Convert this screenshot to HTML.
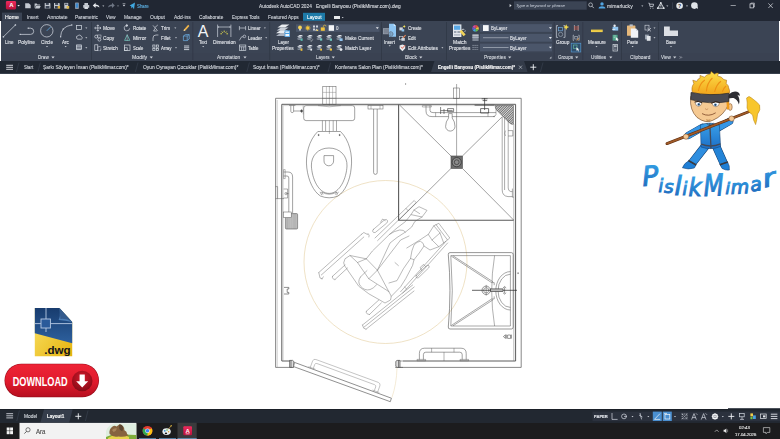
<!DOCTYPE html>
<html><head><meta charset="utf-8"><title>AutoCAD</title>
<style>
html,body{margin:0;padding:0;}
body{width:780px;height:439px;overflow:hidden;background:#fff;position:relative;font-family:"Liberation Sans",sans-serif;}
.abs{position:absolute;}
.t{position:absolute;white-space:nowrap;transform-origin:0 50%;-webkit-text-stroke:.12px currentColor;}
#title{left:0;top:0;width:780px;height:21px;background:#212733;}
#ribbon{left:1px;top:20.6px;width:777.6px;height:40px;background:#3b4454;}
#ribbonlab{left:1px;top:53.2px;width:777.6px;height:7.4px;background:#3a4252;}
#filetabs{left:0;top:60.6px;width:780px;height:13.1px;background:#212833;border-bottom:1.7px solid #38404d;box-sizing:border-box;}
#layoutbar{left:0;top:408.9px;width:780px;height:13.8px;background:#222831;border-top:1px solid #1b2028;box-sizing:border-box;}
#taskbar{left:0;top:422.6px;width:780px;height:16.4px;background:#1c1c1e;}
.sep{position:absolute;top:22px;width:0.6px;height:38px;background:#2c3340;}
.dd{position:absolute;background:#4b566a;height:7.6px;}
svg{position:absolute;left:0;top:0;overflow:visible;}
#txt{position:absolute;left:0;top:0;width:780px;height:439px;will-change:transform;}

</style></head>
<body>
<div id="title" class="abs"></div>
<div id="ribbon" class="abs"></div>
<div id="ribbonlab" class="abs"></div>
<div id="filetabs" class="abs"></div>
<div id="layoutbar" class="abs"></div>
<div id="taskbar" class="abs"></div>

<svg width="780" height="74" viewBox="0 0 780 74" font-family="Liberation Sans, sans-serif">
<defs>
<linearGradient id="gA" x1="0" y1="0" x2="0" y2="1"><stop offset="0" stop-color="#ee2a5c"/><stop offset="1" stop-color="#b9123c"/></linearGradient>
<path id="dn" d="M-1 -0.5 L1 -0.5 L0 0.7 Z"/>
</defs>
<!-- tab backgrounds -->
<rect x="2" y="12.6" width="20" height="8.2" fill="#3b4454"/>
<rect x="303" y="12.8" width="22" height="8" fill="#1d7aa8"/>
<rect x="334" y="16" width="6" height="3" fill="#e6e8ea"/>
<use href="#dn" x="342.7" y="17.5" fill="#cfd3da"/>
<!-- app logo -->
<rect x="5.900" y="1.100" width="10.200" height="8.300" rx="1.300" fill="url(#gA)"/>
<text x="11.400" y="7.300" font-size="6" font-weight="bold" fill="#fff" text-anchor="middle">A</text>
<path d="M17.300 4.900 h2.600 l-1.300 1.500z" fill="#eef0f3"/>
<!-- quick access -->
<g fill="#c3c8d0" stroke="none">
 <path d="M25.200 3.200 h3.600 l1.900 1.700 v3.300 h-5.500z"/>
 <path d="M34.600 3.600 h2.100 l.7 .8 h2.700 v1 h-4.300 l-1.200 2.800z M36.100 5.900 h4.700 l-1.300 2.700 h-4.700z"/>
 <path d="M44.700 3 h5.100 l.6 .6 v4.900 h-5.700z" />
 <path d="M54 3 h5.100 l.6 .6 v4.900 h-5.700z" />
 <path d="M64.300 2.900 h3.900 v5.700 h-3.900z" />
 <rect x="75" y="2.500" width="3.900" height="6.400" rx=".7" fill="#8d96a4"/>
 <path d="M83.200 4.900 h6 v2.900 h-6z M84.400 3 h3.600 v1.900 h-3.600z M84.400 6.900 h3.600 v2 h-3.600z"/>
</g>
<g fill="#3b4454">
 <rect x="45.800" y="3" width="3" height="1.900"/><rect x="45.600" y="6" width="3.900" height="2.500"/>
 <rect x="55.100" y="3" width="3" height="1.900"/><rect x="54.900" y="6" width="3.900" height="2.500"/>
 <rect x="65" y="3.600" width="2.500" height="1.200"/>
 <rect x="75.700" y="3.400" width="2.500" height="4.300" fill="#3b8ad0"/>
 <rect x="84.900" y="7.400" width="2.600" height="1" fill="#f1f3f5"/>
</g>
<rect x="57.700" y="6" width="2.400" height="2.500" fill="#d9aa3a"/>
<rect x="66.600" y="6" width="2.600" height="2.700" fill="#dcb84e"/>
<!-- undo/redo -->
<path d="M99.4 7.6 c0-2.6-2-3.2-3.8-3.2 v-1.6 l-2.8 2.6 2.8 2.6 v-1.7 c1.6 0 2.8.2 3.8 1.3z" fill="#e8ebef"/>
<use href="#dn" x="103.3" y="6" fill="#cfd3da"/>
<path d="M108.2 7.6 c0-2.6 2-3.2 3.8-3.2 v-1.6 l2.8 2.6 -2.8 2.6 v-1.7 c-1.6 0-2.8.2-3.8 1.3z" fill="#6e7684"/>
<use href="#dn" x="118" y="6" fill="#8a909c"/>
<path d="M122.6 4.8 h2.8 l-1.4 1.8z M122.6 3.6 h2.8 v.5 h-2.8z" fill="#cfd3da"/>
<path d="M129.6 5.4 l5.4-2.8 -1 6.6 -1.6-2.2 -1 1.4 -.2-2.2z" fill="#3fa7e0"/>
<!-- search box -->
<path d="M509.600 4 l2 1.600 -2 1.600z" fill="#dfe3e8"/>
<rect x="514" y="1.3" width="72.7" height="8.4" fill="#3b4454"/>
<circle cx="590.6" cy="4.8" r="1.9" fill="none" stroke="#cfd3da" stroke-width=".7"/>
<path d="M592 6.2 l1.8 1.9" stroke="#cfd3da" stroke-width=".8"/>
<circle cx="602" cy="3.9" r="1.7" fill="#52a6e4"/>
<path d="M598.6 8.6 c0-3 6.8-3 6.8 0z" fill="#52a6e4"/>
<use href="#dn" x="642.3" y="6" fill="#cfd3da"/>
<path d="M648.4 3.2 h1 l.6 3.4 h3 l.6-2.4 h-3.8 M650.4 7.8 v.9 M653 7.8 v.9" stroke="#cfd3da" stroke-width=".8" fill="none"/>
<path d="M660.8 2.8 l-3 5.4 h6z M660.8 4.6 v2" stroke="#dfe3e8" stroke-width=".9" fill="none"/>
<circle cx="660.8" cy="2.9" r=".9" fill="#dfe3e8"/><circle cx="657.8" cy="8.2" r=".9" fill="#dfe3e8"/><circle cx="663.8" cy="8.2" r=".9" fill="#dfe3e8"/>
<use href="#dn" x="667.3" y="6" fill="#cfd3da"/>
<rect x="672.2" y="2.4" width=".5" height="6.6" fill="#4a5262"/>
<circle cx="679.6" cy="5.7" r="3.3" fill="#e6e9ed"/>
<text x="679.6" y="7.5" font-size="5" font-weight="bold" fill="#212733" text-anchor="middle">?</text>
<use href="#dn" x="687" y="6" fill="#cfd3da"/>
<circle cx="694.4" cy="5.6" r="3.3" fill="#dfe3e8"/>
<path d="M696 7.4 l2 1.6 -.4-2.4z" fill="#dfe3e8"/>
<!-- window controls -->
<rect x="730.6" y="5.3" width="5.2" height=".6" fill="#e0e3e8"/>
<rect x="750" y="3.9" width="3.6" height="4" fill="none" stroke="#e0e3e8" stroke-width=".7"/>
<path d="M750.9 3.9 v-.8 h3.5 v3.9 h-.8" fill="none" stroke="#e0e3e8" stroke-width=".6"/>
<path d="M768.4 3.4 l4.4 4.6 M772.8 3.4 l-4.4 4.6" stroke="#e0e3e8" stroke-width=".7"/>
</svg>

<svg width="780" height="74" viewBox="0 0 780 74" font-family="Liberation Sans, sans-serif">
<!-- separators -->
<g fill="#2d3441">
<rect x="91.1" y="22" width=".6" height="38"/><rect x="192.6" y="22" width=".6" height="38"/><rect x="269.5" y="22" width=".6" height="38"/>
<rect x="381" y="22" width=".6" height="38"/><rect x="446.3" y="22" width=".6" height="38"/><rect x="553.8" y="22" width=".6" height="38"/>
<rect x="582.6" y="22" width=".6" height="38"/><rect x="621" y="22" width=".6" height="38"/><rect x="658.1" y="22" width=".6" height="38"/>
</g>
<!-- Draw panel -->
<g fill="none" stroke="#cdd3dc" stroke-width=".75">
<path d="M3.4 36.8 L15.4 25"/>
<path d="M20.2 34.4 H30.6 A3 3 0 0 0 30.6 28.2 H28.2"/>
<circle cx="46.8" cy="30.8" r="6.2"/>
<path d="M60.6 36.8 Q61 26.4 71.8 25"/>
<rect x="76.4" y="25.6" width="5.2" height="3.8"/>
<path d="M76.6 38 a1.6 1.6 0 0 1 1.4-2.2 a1.8 1.8 0 0 1 3.2.6 a1.5 1.5 0 0 1 .2 2.8 h-3.6 a1.3 1.3 0 0 1-1.2-1.2z"/>
<rect x="76.6" y="45" width="4.8" height="4.6"/>
<path d="M76 46.4 h6 M76 48.2 h6 M78 44.4 v5.8 M80 44.4 v5.8" stroke-width=".5"/>
</g>
<path d="M46.8 30.8 L50.6 27" stroke="#5aa9e6" stroke-width=".8"/>
<g fill="#cdd3dc"><rect x="2.7" y="36.1" width="1.4" height="1.4"/><rect x="14.7" y="24.3" width="1.4" height="1.4"/>
<rect x="19.6" y="33.8" width="1.2" height="1.2"/><rect x="27.6" y="27.6" width="1.2" height="1.2"/>
<rect x="60" y="36.2" width="1.2" height="1.2"/><rect x="71.2" y="24.4" width="1.2" height="1.2"/><rect x="62.6" y="28.4" width="1.2" height="1.2"/></g>
<g fill="#cfd3da">
<use href="#dn" x="86.3" y="28"/><use href="#dn" x="86.3" y="37.8"/><use href="#dn" x="86.3" y="47.7"/>
<use href="#dn" x="47" y="46.6"/><use href="#dn" x="65.7" y="46.6"/>
<use href="#dn" x="175.3" y="28"/><use href="#dn" x="176" y="37.8"/><use href="#dn" x="176" y="47.7"/>
<use href="#dn" x="203.2" y="46.6"/><use href="#dn" x="264.9" y="28"/><use href="#dn" x="266.2" y="37.8"/>
<use href="#dn" x="389.7" y="45.8"/><use href="#dn" x="442.4" y="47.7"/>
<use href="#dn" x="596.5" y="46.6"/><use href="#dn" x="632.6" y="46.6"/><use href="#dn" x="654.5" y="28"/><use href="#dn" x="654.5" y="37.8"/><use href="#dn" x="671" y="46.6"/>
<!-- panel label arrows -->
<g transform="translate(0,57.4) scale(1.6)">
<use href="#dn" x="33.12" y="0"/><use href="#dn" x="94.56" y="0"/><use href="#dn" x="153.12" y="0"/><use href="#dn" x="208.31" y="0"/><use href="#dn" x="263.00" y="0"/><use href="#dn" x="318.56" y="0"/><use href="#dn" x="360.44" y="0"/><use href="#dn" x="381.75" y="0"/><use href="#dn" x="421.69" y="0"/>
</g>
<path d="M551.4 56.6 v1.8 h-1.8z"/>
<path d="M679.6 56.4 l.9 1 -.9 1 M680.9 56.4 l.9 1 -.9 1" fill="none" stroke="#cfd3da" stroke-width=".5"/>
</g>
<!-- Modify panel -->
<g fill="none" stroke="#d5dae2" stroke-width=".7">
<path d="M97.8 25 v6 M94.8 28 h6 M96.8 26 l1-1.2 1 1.2 M96.8 30 l1 1.2 1-1.2 M95.8 27 l-1.2 1 1.2 1 M99.8 27 l1.2 1 -1.2 1"/>
<circle cx="96.2" cy="36.6" r="1.5"/><circle cx="99.4" cy="39.6" r="1.5"/><rect x="97.6" y="35" width="3.4" height="2.2" stroke-width=".5"/>
<rect x="94.8" y="44.8" width="3" height="5.8"/><rect x="97.8" y="46.6" width="3" height="4" stroke-dasharray=".8 .6"/>
<path d="M129.6 28.4 a2.7 2.7 0 1 1 -2-2.9" /><path d="M126.6 24.4 l1.4 1.2 -1.6 .9z" fill="#d5dae2"/>
<rect x="124.4" y="45" width="5.6" height="5.6"/><rect x="124.4" y="47.8" width="2.8" height="2.8"/>
<path d="M153 25.4 l4.6 5.4 M157.8 25 l-3 2.6 M155 28.4 l-1.4 2.6 h3.2"/>
<path d="M153 41 v-3 a3 3 0 0 1 3-3 h2.4"/>
<rect x="152.8" y="45" width="2.2" height="2.2"/><rect x="156.4" y="45" width="2.2" height="2.2"/><rect x="152.8" y="48.4" width="2.2" height="2.2"/><rect x="156.4" y="48.4" width="2.2" height="2.2"/>
<path d="M184 46 h5.2 M184 47.8 h5.2 M184 49.6 h5.2" stroke-width=".9"/>
</g>
<path d="M127.2 34.8 l2.6 5.6 h-5.2z" fill="none" stroke="#6fc0b8" stroke-width=".8"/>
<path d="M127.2 34.4 v6.4" stroke="#d5dae2" stroke-width=".4"/>
<path d="M183.6 31 l.6-1.8 4-4.4 1.2 1.2 -4 4.4z" fill="#f0b54a"/><path d="M183.6 31 l.6-1.8 1.2 1.2z" fill="#f6e0b0"/>
<path d="M183.4 36 l2-1.4 h3.8 v4.4 l-2 1.6 h-3.8z M183.4 36 h3.8 l2-1.4 M187.2 36 v4.6" fill="none" stroke="#6fb1e8" stroke-width=".7"/>
<!-- Annotation -->
<text x="203.1" y="36.5" font-size="16" fill="#f2f4f7" text-anchor="middle">A</text>
<g fill="none" stroke="#cdd3dc" stroke-width=".7">
<path d="M217.6 24.6 v12.4 M230.9 24.6 v12.4 M217.6 27 h13.3"/>
<path d="M239.4 26 v4.2 M245.6 26 v4.2 M239.4 28 h6.2"/>
<path d="M239.4 40.4 l2.2-3.6 h1.6"/><circle cx="244.4" cy="36.4" r="1.3"/>
<rect x="239.4" y="45" width="6.4" height="5.4"/><path d="M239.4 46.8 h6.4 M241.6 46.8 v3.6 M243.7 46.8 v3.6"/>
</g>
<path d="M219 26.2 l-1.2 .8 1.2 .8z M229.5 26.2 l1.2 .8 -1.2 .8z" fill="#cdd3dc"/>
<path d="M224.2 30.6 v1.6 M221.8 31.6 l1 1.2 M226.6 31.6 l-1 1.2 M220.4 33.8 h1.6 M226.4 33.8 h1.6" stroke="#e8e04a" stroke-width=".9"/>
<!-- Layers -->
<path d="M277.4 27.6 l4.4-3 h7.6 l-4.4 3z" fill="#e9ecf0"/><path d="M276.6 30.4 l4.4-3 h7.6 l-4.4 3z" fill="#c9cfd8"/><path d="M276 33.2 l4.400-3 h7.600 l-4.400 3z" fill="#e9ecf0"/><path d="M276 36 l4.400-3 h5 v3z" fill="#aab2bf"/>
<rect x="284.600" y="30.400" width="5.400" height="6.600" fill="#4d9fe0"/><rect x="285.400" y="31.400" width="3.800" height="1.600" fill="#d7ecfb"/><rect x="285.400" y="34" width="3.800" height="2.200" fill="#f4f6f8"/>
<rect x="296" y="24.300" width="83.500" height="7.600" fill="#4b566a"/>
<circle cx="300" cy="27.400" r="1.900" fill="#f3d25a"/><rect x="299.200" y="29" width="1.600" height="1.600" fill="#d9dde3"/>
<circle cx="307.800" cy="28" r="1.700" fill="#f3c43a"/><path d="M307.800 25 v6 M304.800 28 h6 M305.700 25.900 l4.200 4.200 M309.900 25.900 l-4.200 4.200" stroke="#f3c43a" stroke-width=".5"/>
<path d="M313 25.400 h2 v2 h-2z M316 25.400 h2 v2 h-2z M313 28.600 h2 v2 h-2z M316.400 28.400 l1.400 2.400 h-2.800z" fill="#cfd4dc"/><rect x="316.600" y="29.600" width="1.600" height="1.400" fill="#f3d25a"/>
<rect x="320.800" y="27.400" width="4" height="3.400" fill="#f0c33c"/><path d="M323.400 27.400 v-1 a1.300 1.300 0 0 1 2.600 0" fill="none" stroke="#f0c33c" stroke-width=".7"/>
<rect x="328.700" y="25.200" width="5.300" height="5.600" fill="#f4f5f7"/>
<path d="M375.80 27.30 h3 l-1.5 1.8z" fill="#e6e9ee"/>
<defs><g id="lyr"><path d="M0 -1 l2.600-1.800 h3.400 l-2.600 1.800z" fill="#dfe3e8"/><path d="M0 .6 l2.600-1.800 h3.400 l-2.600 1.800z" fill="#aab2bf"/><path d="M0 2.200 l2.600-1.800 h3.400 l-2.600 1.800z" fill="#7f8896"/></g></defs>
<use href="#lyr" x="306.700" y="37.800"/><use href="#lyr" x="316.400" y="37.800"/><use href="#lyr" x="326" y="37.800"/><use href="#lyr" x="336.200" y="37.800"/>
<use href="#lyr" x="297" y="47.700"/><use href="#lyr" x="306.700" y="47.700"/><use href="#lyr" x="316.400" y="47.700"/><use href="#lyr" x="326" y="47.700"/><use href="#lyr" x="336.200" y="47.700"/>
<use href="#lyr" x="297" y="37.800"/>
<g>
<rect x="300.600" y="38.600" width="2" height="2.200" fill="#59c3b5"/><path d="M310.400 40.600 l.8 .8 1.600-2" stroke="#e8ebef" stroke-width=".6" fill="none"/><rect x="320" y="38.400" width="2.200" height="2.200" fill="#6ec7c0"/><rect x="329.800" y="38.600" width="2.200" height="2.200" fill="#6ec7c0"/>
<rect x="339.600" y="38.400" width="3" height="2.600" fill="#8fc3ee"/>
<rect x="300.600" y="48.600" width="1.800" height="2.200" fill="#f0c33c"/><circle cx="311.200" cy="49.800" r="1" fill="#e8ebef"/><rect x="320.200" y="48.800" width="1.800" height="1.800" fill="#f0c33c"/><rect x="329.800" y="48.600" width="2.200" height="2" fill="#f0c33c"/>
<circle cx="341" cy="49.600" r="1.400" fill="#e8ebef"/>
</g>
<!-- Block -->
<rect x="383" y="28.200" width="8.600" height="6" fill="#9aa3b0"/><rect x="383.600" y="28.800" width="7.400" height="4.800" fill="#7c8594"/>
<path d="M389 23.800 h4.800 l2.200 2.200 v10.800 h-7z" fill="#8ec5f2"/><path d="M393.800 23.800 v2.200 h2.200z" fill="#d8ecfb"/>
<circle cx="390.800" cy="34" r="2.200" fill="none" stroke="#555e6c" stroke-width=".6"/><path d="M388.200 34 h5.200 M390.800 31.400 v5.200" stroke="#555e6c" stroke-width=".4"/>
<g>
<rect x="399.400" y="27.400" width="3.400" height="3" fill="#cfd4dc"/><path d="M401.600 29.600 l2.600-.6 v2.600 h-2.600z" fill="#8fc3ee"/><path d="M404.200 24.800 l.5 1.100 1.100 .500 -1.100 .500 -.5 1.100 -.5-1.100 -1.100-.500 1.100-.500z" fill="#f3e25a"/>
<rect x="399.400" y="36.400" width="3.400" height="3.400" fill="none" stroke="#cfd4dc" stroke-width=".6"/><rect x="401.400" y="38" width="3.400" height="2.800" fill="#cfd4dc"/><path d="M402.600 37.400 l2.600-2.600 .8 .8 -2.600 2.600z" fill="#f08a5a"/>
<path d="M399.600 45.400 l2.800-1 2.800 1 v3 l-2.800 2.800 -2.800-2.800z" fill="#e8ebef"/><path d="M401.200 46.800 l1.200 1.600 2.800-3.400" stroke="#e0503a" stroke-width=".8" fill="none"/>
</g>
<!-- Properties -->
<path d="M453 24.400 h8.400 v12.600 h-8.400z" fill="#e4e7ec"/><rect x="454" y="25.600" width="6.200" height="4.200" fill="#5aa9e6"/><rect x="454" y="31" width="2.400" height="2" fill="#9aa3b0"/><rect x="457.400" y="31" width="2.800" height="2" fill="#9aa3b0"/><rect x="454" y="34" width="6.200" height="1.800" fill="#b8bfc9"/>
<path d="M459.600 31.400 l2-1.600 4 4.600 -2 1.800z" fill="#f0d35a"/><path d="M461.600 29.800 l1.800-.8 .8 1 M464.400 31.400 l1.400-.6" stroke="#f4f6f8" stroke-width=".7" fill="none"/>
<g transform="translate(475.500,28.400)">
<path d="M0 0 L0 -3.300 A3.300 3.300 0 0 1 2.860 -1.650z" fill="#e8533a"/><path d="M0 0 L2.860 -1.650 A3.300 3.300 0 0 1 2.860 1.650z" fill="#f0c33c"/><path d="M0 0 L2.860 1.650 A3.300 3.300 0 0 1 0 3.300z" fill="#6cc04a"/>
<path d="M0 0 L0 3.300 A3.300 3.300 0 0 1 -2.860 1.650z" fill="#3fa7e0"/><path d="M0 0 L-2.860 1.650 A3.300 3.300 0 0 1 -2.860 -1.650z" fill="#6a5acd"/><path d="M0 0 L-2.860 -1.650 A3.300 3.300 0 0 1 0 -3.300z" fill="#d64a9a"/>
</g>
<rect x="472.400" y="34.600" width="6.200" height="6.400" fill="#7f8896"/><rect x="472.400" y="34.600" width="6.200" height="1" fill="#dfe3e8"/><rect x="472.400" y="36.600" width="6.200" height="1.400" fill="#aab2bf"/>
<path d="M472.400 45.400 h6.200 M472.400 47.400 h6.200 M472.400 49.400 h6.200" stroke="#9aa3b0" stroke-width=".8" stroke-dasharray="1.400 .6"/>
<rect x="480" y="24.100" width="72" height="7.800" fill="#4b566a"/><rect x="480" y="33.900" width="72" height="7.800" fill="#4b566a"/><rect x="480" y="43.600" width="72" height="7.800" fill="#4b566a"/>
<rect x="483" y="25.100" width="5.700" height="5.900" fill="#f6f7f9"/>
<rect x="483" y="37.600" width="25.600" height=".5" fill="#d5dae2"/><rect x="483" y="47.400" width="25.600" height=".5" fill="#d5dae2"/>
<path d="M548.90 27.30 h3 l-1.5 1.8z" fill="#e6e9ee"/><path d="M548.90 37.10 h3 l-1.5 1.8z" fill="#e6e9ee"/><path d="M548.90 46.80 h3 l-1.5 1.8z" fill="#e6e9ee"/>
<!-- Groups -->
<g fill="none" stroke="#cdd3dc" stroke-width=".7">
<path d="M558 25.600 h-1.600 v11.800 h1.600 M563.400 25.600 h1.600 v11.800 h-1.600"/>
<rect x="558.400" y="27.400" width="4.200" height="3.400" stroke="#6fa6d6"/><circle cx="560.600" cy="34.400" r="2.100" stroke="#9aa3b0"/>
</g>
<path d="M566.200 24.200 l.9 2 2 .9 -2 .9 -.9 2 -.9-2 -2-.9 2-.9z" fill="#f3d84a"/>
<path d="M574.400 25 v6 M578.200 25 v6" stroke="#cdd3dc" stroke-width=".6"/><path d="M574 27 h4.800 M574 29 h4.800" stroke="#e8533a" stroke-width=".7"/>
<path d="M574 35.200 h-.8 v5.200 h.8 M578.400 35.200 h.8 v5.200 h-.8" stroke="#cdd3dc" stroke-width=".6" fill="none"/><rect x="574.800" y="36.400" width="2.600" height="2.600" fill="none" stroke="#cdd3dc" stroke-width=".5"/><path d="M576.600 40.600 l2.600-2.400" stroke="#f0a54a" stroke-width=".9"/>
<rect x="571.200" y="43.200" width="9.600" height="8.800" fill="#2f4f6e" stroke="#5a9fd8" stroke-width=".6"/>
<rect x="573.400" y="45" width="3.600" height="3.400" fill="none" stroke="#6cc0a0" stroke-width=".6"/><path d="M576.400 47.200 v3.600 l1-.9 .8 1.500 .7-.4 -.8-1.400 1.300-.1z" fill="#f4f6f8"/>
<!-- Utilities -->
<rect x="591" y="29.600" width="11.700" height="2.500" fill="#f1cf4a"/><path d="M593 29.600 v1.200 M595 29.600 v1.200 M597 29.600 v1.200 M599 29.600 v1.200 M601 29.600 v1.200" stroke="#a88a20" stroke-width=".3"/>
<rect x="612.600" y="26.800" width="5.600" height="3.800" fill="#8fc3ee"/><circle cx="614.600" cy="25.800" r="1.200" fill="#e8ebef"/><path d="M612.200 29.400 h3" stroke="#f4f6f8" stroke-width=".8"/>
<rect x="612.600" y="34.800" width="5" height="5.800" fill="#4fa58a"/><path d="M615.800 37 v3.800 l1-.9 .8 1.400 .7-.4 -.8-1.400 1.300-.1z" fill="#f4f6f8"/><path d="M613.600 36 h2.600 M613.600 37.600 h1.600" stroke="#cfe8df" stroke-width=".5"/>
<rect x="613" y="44.400" width="4.600" height="6.600" fill="none" stroke="#d5dae2" stroke-width=".7"/><rect x="613.900" y="45.400" width="2.800" height="1.400" fill="#d5dae2"/><path d="M614 48 h2.600 M614 49.400 h2.600" stroke="#d5dae2" stroke-width=".6" stroke-dasharray=".7 .4"/>
<!-- Clipboard -->
<rect x="627" y="25.400" width="8.400" height="10.400" rx=".6" fill="#e6b87a"/><rect x="629.600" y="24.400" width="3.200" height="2" fill="#b9bfc9"/>
<path d="M630.800 28.600 h5.200 l2.200 2.200 v7 h-7.400z" fill="#f1f3f6"/><path d="M636 28.600 v2.200 h2.200z" fill="#c9cfd8"/>
<rect x="645" y="25.200" width="4" height="4.800" fill="none" stroke="#d5dae2" stroke-width=".6"/><path d="M647.400 28 l3.600 3.400 M651 28 l-3.600 3.400" stroke="#d5dae2" stroke-width=".7"/>
<rect x="645" y="34.600" width="3.800" height="4.800" fill="#9aa3b0"/><rect x="646.800" y="36" width="3.800" height="4.800" fill="#e1e5ea"/>
<!-- View -->
<path d="M664 26.400 h5.800 v4.200 h8.200 v5.400 h-14z" fill="#dcdfe4"/>
</svg>

<svg width="780" height="439" viewBox="0 0 780 439" font-family="Liberation Sans, sans-serif">
<!-- file tab bar -->
<path d="M434.500 60.800 H524 L527.600 72 H431z" fill="#333b49"/>
<g stroke="#e4e7ec" stroke-width=".9"><path d="M6.200 65.300 h6.800 M6.200 67.300 h6.800 M6.200 69.300 h6.800"/></g>
<g stroke="#3a4352" stroke-width=".6"><path d="M19 62.500 l-2.600 9.500 M40.400 62.500 l-2.600 9.500 M138 62.500 l-2.600 9.500 M249.400 62.500 l-2.600 9.500 M330.600 62.500 l-2.600 9.500 M543 62.500 l-2.600 9.500"/></g>
<path d="M519 65.600 l3 3.200 M522 65.600 l-3 3.200" stroke="#cfd3da" stroke-width=".6"/>
<path d="M530.300 67.200 h6 M533.300 64.200 v6" stroke="#f2f4f7" stroke-width=".9"/>
<!-- layout bar -->
<path d="M44 409.600 H72.600 L69.200 422.600 H40.400z" fill="#353d4b"/>
<g stroke="#cfd3da" stroke-width=".9"><path d="M6.300 413.700 h6.800 M6.300 415.800 h6.800 M6.300 417.900 h6.800"/></g>
<g stroke="#3a4352" stroke-width=".6"><path d="M19.400 410.500 l-2.600 10.500 M88 410.500 l-2.600 10.500"/></g>
<path d="M75.300 416.300 h6 M78.300 413.300 v6" stroke="#f2f4f7" stroke-width=".9"/>
<!-- status icons -->
<rect x="592.500" y="411.600" width="187.500" height="9.600" fill="#2b313d"/>
<rect x="728" y="408.200" width="52" height="1.200" fill="#212833"/>
<rect x="652.800" y="411.600" width="9" height="9.400" fill="#4a8fd0"/><rect x="662.800" y="411.600" width="9" height="9.400" fill="#4a8fd0"/>
<g fill="none" stroke="#d5dae2" stroke-width=".7">
<path d="M612 413 v6.400 h5.600"/><circle cx="624" cy="416.400" r="2.400"/><path d="M624 416.400 h3"/>
<path d="M640 413 l1.600 6.400 M639 415 l3.400 2"/>
<path d="M654.600 419.200 l5.400-5.600 M654.400 419.400 h5.800" stroke="#f4f6f8"/>
<rect x="665" y="414.400" width="4.800" height="4.600" stroke="#f4f6f8"/><path d="M664 413.400 h3" stroke="#f4f6f8"/>
<rect x="682.200" y="414" width="4.800" height="4.800" stroke-dasharray="1.200 .8"/><path d="M681.600 413.400 l6 6 M687.600 413.400 l-6 6" stroke-width=".4"/>
<path d="M691.600 419.600 l2.400-6 2.400 6 M692.400 417.600 h3.200 M696 413.400 l1.400 1.400"/>
<path d="M701.200 419.600 l2.400-6 2.400 6 M702 417.600 h3.200 M705.600 413.400 l1.400 1.400"/>
<path d="M728.300 416.400 h6 M731.300 413.400 v6" stroke="#f2f4f7" stroke-width=".9"/>
<rect x="739.600" y="413.400" width="4.600" height="3.400"/><path d="M742 416.800 v2.400 M740 419.400 h4"/>
<rect x="760.600" y="414" width="5.600" height="4.400" stroke="#e4e7ec"/><rect x="763" y="415.400" width="2.400" height="2" fill="#e4e7ec" stroke="none"/>
<path d="M770.800 414.200 h6.600 M770.800 416.400 h6.600 M770.800 418.600 h6.600" stroke="#e4e7ec" stroke-width=".9"/>
</g>
<circle cx="715" cy="416.400" r="2.300" fill="none" stroke="#f2f4f7" stroke-width="1.300"/>
<path d="M715 413 v6.800 M711.600 416.400 h6.800 M712.600 414 l4.800 4.800 M717.400 414 l-4.800 4.800" stroke="#f2f4f7" stroke-width=".7"/>
<rect x="750.400" y="413.400" width="2.600" height="3" fill="#f1cf4a"/><rect x="753" y="415.400" width="2.800" height="3.600" fill="#4a9fe0"/><rect x="750.400" y="417" width="2.200" height="2.200" fill="#6cc04a"/>
<g fill="#cfd3da"><use href="#dn" x="632.500" y="416.600"/><use href="#dn" x="648.300" y="416.600"/><use href="#dn" x="675" y="416.600"/><use href="#dn" x="722.800" y="416.600"/></g>
<!-- taskbar -->
<rect x="19.500" y="422.900" width="116.800" height="16.100" fill="#f2f2f2"/>
<g fill="#f4f4f4"><rect x="6.700" y="427.500" width="2.900" height="3.100"/><rect x="10.100" y="427.500" width="2.900" height="3.100"/><rect x="6.700" y="431.100" width="2.900" height="3.100"/><rect x="10.100" y="431.100" width="2.900" height="3.100"/></g>
<circle cx="28" cy="429.800" r="2.100" fill="none" stroke="#333" stroke-width=".65"/><path d="M26.500 431.400 l-2.100 2.200" stroke="#333" stroke-width=".75"/>
<!-- bird picture -->
<g>
<path d="M106 439 V431 Q108 424 116 423.400 H136.300 V439z" fill="#dfeee0"/>
<path d="M106 439 v-2 q8-4 16-3 t14.300 1 v4z" fill="#7fae3a"/><path d="M108 438 q6-4 12-3.600 q5 .4 9 2.600 v2 h-21z" fill="#e6d24a"/>
<path d="M109.600 434 q-1-5 3-7.600 q2-1.200 4 .2 l2.600-2 q2.600-.6 3.600 1.600 q1.800 1.200 1.600 4 q2.600 1 2.800 4 l1.400 1.400 q-6 2-10 .8 q-5 1.600-9-2.400z" fill="#86633f"/>
<path d="M119.200 424.600 q2.600-.6 3.600 1.600 q1 2.600-.6 5 q-2.400-.4-3-3z" fill="#5d4630"/>
<path d="M112 430 q2-2.400 5-1.600 q-1 3-3.400 3.600z" fill="#a9865c"/>
</g>
<!-- chrome -->
<circle cx="147.500" cy="430.800" r="4.900" fill="#e33b2e"/>
<path d="M147.500 430.800 L143.260 428.350 A4.900 4.900 0 0 0 147.500 435.700 L149.950 431.400z" fill="#2da94f"/>
<path d="M147.500 430.800 L151.740 428.350 A4.900 4.900 0 0 1 147.500 435.700z" fill="#fbc116"/>
<circle cx="147.500" cy="430.800" r="2.300" fill="#f4f4f4"/><circle cx="147.500" cy="430.800" r="1.800" fill="#4285f4"/>
<!-- paint-ish icon -->
<ellipse cx="166.600" cy="431.600" rx="4.200" ry="3.400" fill="#e9eef2"/><circle cx="164.800" cy="430.800" r=".9" fill="#3a8fd0"/><circle cx="167" cy="430" r=".8" fill="#58b04a"/><circle cx="168.600" cy="431.800" r=".8" fill="#e0a030"/><ellipse cx="166" cy="433.400" rx="1.200" ry=".8" fill="#1b1b1c"/>
<path d="M168.200 429.400 l2.800-3.400" stroke="#c9a24a" stroke-width=".8"/><circle cx="171.200" cy="425.800" r=".7" fill="#e8c040"/>
<!-- autocad -->
<rect x="177.500" y="422.700" width="19.200" height="16.300" fill="#3a3a3c"/>
<rect x="183.300" y="426.300" width="8.700" height="9" rx="1" fill="url(#gA)"/>
<text x="187.650" y="432.600" font-size="6" font-weight="bold" fill="#fff" text-anchor="middle">A</text>
<rect x="185.600" y="433.400" width="4" height=".9" fill="#f4b8c8"/>
<g fill="#6aa6d8"><rect x="139" y="438.300" width="17" height=".7"/><rect x="159" y="438.300" width="17" height=".7"/><rect x="177.500" y="438.300" width="19.200" height=".7"/></g>
<!-- tray -->
<path d="M714.800 431.800 l1.900-1.900 1.900 1.900" fill="none" stroke="#e8e8e8" stroke-width=".6"/>
<path d="M723.600 429.800 h1.200 l1.600-1.400 v4.800 l-1.600-1.400 h-1.200z" fill="#e8e8e8"/><path d="M727.600 429.400 v2.800" stroke="#e8e8e8" stroke-width=".4"/>
<path d="M763.400 427.600 h6.400 v4.800 h-2.400 l-1.400 1.400 v-1.400 h-2.600z" fill="none" stroke="#e8e8e8" stroke-width=".6"/>
</svg>

<svg width="780" height="439" viewBox="0 0 780 439">
<defs>
<pattern id="hatch" width="1.2" height="1.2" patternUnits="userSpaceOnUse" patternTransform="rotate(45)"><rect width="1.2" height="1.2" fill="#d8d8d8"/><rect width=".55" height="1.2" fill="#666"/></pattern>
<pattern id="vh" width="1" height="4" patternUnits="userSpaceOnUse"><rect width="1" height="4" fill="#e4e4e4"/><rect width=".35" height="4" fill="#666"/></pattern>
</defs>
<!-- orange circle + door swing -->
<circle cx="385.5" cy="262" r="81.5" fill="none" stroke="#e4cfa0" stroke-width=".6"/>
<path d="M397 367.600 Q396.600 384 391.900 397.600" fill="none" stroke="#e9d6ae" stroke-width=".5"/>
<!-- wheelchair (light) -->
<g fill="none" stroke="#808080" stroke-width=".55" stroke-linejoin="round" stroke-linecap="round">
<path d="M318.800 272.500 L361.300 234.500 M321.300 275 L363.800 237 M318.800 272.500 L320 278 L322.500 278.800 M361.300 234.500 L363.800 232.500 L367.500 234.500 M323.600 276.800 l-2 2"/>
<path d="M332.500 276.300 L345 265 M335 279.500 L347.500 268 M332.500 276.300 q-1 2.800 2.500 3.200"/>
<path d="M362.500 325 L412.600 285 M364.200 327 L414.200 287 M366 329.200 L414 291 M362.500 325 l1.200 3.200 l2.300 1"/>
<path d="M366.300 311.300 L378.800 300 M369.500 314.500 L381.300 303 M366.300 311.300 q-1 2.800 3.200 3.200"/>
<path d="M343.800 262.500 L345 258.800 L350 255.500 L366.300 258.800 L377.400 270.200 L391.300 296.300 L390.500 300 L385 303 L368.800 293.800 L358.800 286.300 L345 266.300Z"/>
<path d="M350 255.500 L357.500 262.500 L366.300 258.800 M357.500 262.500 L368.800 278.800 L377.400 270.200 M368.800 278.800 L389 291.700"/>
<path d="M360.400 277 Q357 282 360.600 286.200 Q364.600 291 370 289.600 Q373 288.800 376.600 284.800 M360.400 277 L367 270.600"/>
<path d="M366.300 258.800 L372.400 251 L389.500 234.400 L397 228 L405.500 221.500 L411 214.600 L414 210 L419 206.700 L427 210.400 L422 217 L414.800 221.500 L411.700 227 L405.500 232 L397 237.500 L390 243 L377.400 270.200"/>
<path d="M389.500 234.400 Q394 231 399.600 230 Q403.600 229.600 405.500 232 M411 214.600 L422 217 M414 210 L419.600 213.600"/>
<path d="M375 238 L414.200 200.500 L416.200 202.600 L377.600 240.600 M406 208.400 l2 2.200"/>
<path d="M373.200 229.600 L384.600 219.800 Q386.400 218.800 387.400 220.400 Q388 222 386.600 223.200 L375.400 232.400 Q373.600 233.200 372.800 231.800 Q372.400 230.400 373.200 229.600Z M380.600 222.200 L382.600 219 L385.200 220.600 M368 233.400 q2 1.600 1 3.600"/>
<path d="M377.400 270.200 L400.600 240 L409 236 M389 283 L397 280.600 Q403 268 410.500 258.500 Q411.600 250 414 245 Q417 241.600 420.300 241.200 Q424 243 424 246 Q419.600 253 414 259.700 Q413 266 410.500 269.500 Q406 279 400.600 286.800 L391.300 296.300"/>
<path d="M410.500 258.500 L414 259.700 M395 262.600 l3.400 3"/>
<path d="M406.800 248 L419 240.500 L428.300 234.400 L433.800 225.800 L438.800 223.300 L449.800 238 L443.700 243 L438.800 246.700 L430 250 L424 246"/>
<path d="M428.300 234.400 L432 240 L438.800 246.700 M433.800 225.800 L440 233 L443.700 243 M432 240 L440 233 M436 224.600 L447.400 239.800"/>
<path d="M400.600 291.700 L446 241.200 M402.600 293.200 L447.600 243 M404.600 287 l2 2"/>
<path d="M416.400 275.400 L426.600 265.600 Q428 264.600 429 265.800 Q429.600 267 428.600 268 L418.600 277.600 Q417.200 278.400 416.200 277.400 Q415.600 276.400 416.400 275.400Z M421.600 270.400 L420.200 267.400 L423.600 264.400 L425.600 266.600"/>
</g>
<!-- walls -->
<g fill="none" stroke="#4a4a4a" stroke-width=".7">
<path d="M294 367.400 H275.600 V98.300 H521.200 V367.400 H395.200" stroke-width=".75" stroke="#606060"/>
<path d="M277.200 367 V100" stroke="#888" stroke-width=".4"/>
<path d="M290 361 H281.800 V104.300 H515.600 V361 H403" stroke-width="1" stroke="#5c5c5c"/>
<path d="M283.200 361 V105.600 H514.400" stroke="#999" stroke-width=".4"/>
<path d="M289.600 360.400 h3 l1.200 1 v5 l-1.200 1 h-3z M291 360.400 v7" fill="#ddd" stroke="#333" stroke-width=".6"/>
<path d="M400 360.400 h-3 l-1.200 1 v5 l1.200 1 h3z M398.600 360.400 v7" fill="#ddd" stroke="#333" stroke-width=".6"/>
<path d="M400 361 h3 M400 367.400 h3" stroke-width=".5"/>
</g>
<!-- shower -->
<g fill="none" stroke="#555" stroke-width=".6">
<path d="M398.600 104.400 V220.200 H513.800" stroke-width="1.100" stroke="#5a5a5a"/>
<path d="M513.800 124 V361" stroke-width=".5" stroke="#777"/>
<path d="M399.600 105 L451 156 M502.400 116.600 L462.400 156 M451 168.400 L399 220 M462.400 168.400 L513.600 220" stroke-width=".55"/>
<path d="M456.600 84 V156" stroke-width=".5"/>
<rect x="453.600" y="88" width="6" height="10.400" stroke-width=".5"/>
<rect x="451" y="156" width="11.400" height="12.400" fill="#6c6c6c" stroke="#444"/>
<circle cx="456.700" cy="162.200" r="4.600" fill="#8c8c8c" stroke="#333" stroke-width=".8"/><circle cx="456.700" cy="162.200" r="2.400" fill="none" stroke="#333" stroke-width=".7"/>
<path d="M426 105.600 V111 Q426 116.600 432 116.600 H495 M430 105.600 V110.400 Q430 112.600 433 112.600 H496" stroke-width=".55"/>
<path d="M422.400 105.600 h9 v1.400 h-9z" stroke-width=".4"/>
<path d="M435.600 112.600 v4 M488 112.600 v4 M496 108 v6.400 Q495.600 116.600 493 116.600" stroke-width=".45"/>
<path d="M448.600 113.600 V118 Q445.600 121.600 445.600 126.400 A4.700 4.700 0 0 0 455 126.400 Q455 121.600 452.200 118 V113.600 Z" fill="#fff" stroke-width=".55"/>
<path d="M440.600 107 v7 M444 109 v5 M440.600 110.600 h12 M447.600 108.600 h6 v3 h-6z" stroke="#333" stroke-width=".6"/>
<path d="M474.600 105.200 h20 M481.600 98.800 h6 M482.600 100.600 h4.600 M484.600 98 v12 M480.600 108.600 h8 v4.400 h-8z" stroke="#333" stroke-width=".7"/>
<path d="M495.200 105.600 H513.400 V124.200 Q511 124.600 509.600 123 L497 110.400 Q495 108.400 495.200 105.600Z" fill="url(#hatch)" stroke="#555" stroke-width=".6"/>
<path d="M502.200 117 V190 Q502.200 196 508 196.600 H512.400 M508.200 120 V188 Q508.200 191 510.800 191.600 H512.400 M504.600 117 V190" stroke-width=".5"/>
<path d="M508.200 130.600 h4.600 v5.400 h-4.600 M512.400 188.600 v8.600 h1.400" stroke-width=".5"/>
<path d="M505.600 130.600 q-1.600 2.700 0 5.400" stroke-width=".4"/>
</g>
<path d="M405.600 83 v2" stroke="#555" stroke-width=".5"/>
<!-- toilet -->
<g fill="none" stroke="#555" stroke-width=".55">
<rect x="322.800" y="86.400" width="13.200" height="18" stroke-width=".5"/><path d="M322.800 92.400 h13.200 M322.800 98.400 h13.200 M326.400 86.400 v18 M332.600 86.400 v18" stroke-width=".4" stroke="#777"/>
<path d="M329.400 86 V134" stroke-width=".4"/>
<rect x="303.700" y="105.600" width="51" height="15" rx="2.400" fill="#fff"/>
<path d="M318 105.600 q11.400 2.400 22.800 0" stroke-width=".4"/>
<path d="M322.400 120.600 V131 M336.500 120.600 V131 M325.600 120.600 V131 M333.200 120.600 V131" stroke-width=".5"/>
<path d="M317.800 131.500 C309 140 305.200 155 306.800 168 C308.400 181 313.600 191.600 320.400 196 Q329.200 199.600 338 196 C344.800 191.600 350 181 351.200 168 C352.800 155 349.400 140 340.500 131.500 Z"/>
<path d="M329 148 C318 148 311 156 311.400 166 C312 178 318 193.400 329.200 193.400 C340 193.400 346.500 178 347 166 C347.400 156 340 148 329 148Z"/>
<path d="M321.600 192 q7.600 4.400 15.200 0 M320 191.800 l1.800 3.400 M338.400 191.800 l-1.800 3.400 M321.600 192 l1.400 2.600 M336.800 192 l-1.400 2.600" stroke-width=".5"/>
<path d="M324 155.600 H333.600 V161 A4.800 4.800 0 0 1 324 161Z"/>
<circle cx="318.600" cy="135" r=".6" fill="#333"/><circle cx="339.600" cy="135" r=".6" fill="#333"/>
<!-- vertical grab bar -->
<path d="M373.600 109 V172.600 Q373.600 174.400 375.400 174.400 Q377.200 174.400 377.200 172.600 V109" />
<rect x="368" y="105.600" width="15" height="3.400" stroke-width=".5"/><path d="M371 105.600 v3.400 M380 105.600 v3.400" stroke-width=".4"/>
<!-- hook top-left -->
<path d="M289 105.400 h6.400 M290.800 105.400 v6 q.2 1.200 1.400 1.200 q1.200 0 1.400-1.200 v-6 M293.600 111 h7.400" stroke="#666" stroke-width=".6"/><ellipse cx="301.600" cy="111" rx=".9" ry="1.300" fill="#444"/><path d="M303.200 105.400 v9" stroke="#777" stroke-width=".4"/>
<!-- left grab bar -->
<path d="M283.600 172 H288 Q292.600 172 292.600 177 V213 M283.600 176 H287 Q288.800 176 288.800 178 V213" />
<path d="M283.600 169.600 v9 h1.600 v-9z" stroke-width=".4"/>
<path d="M275.600 186.600 h2 v12 M275.600 198.600 H284 M283.600 189 h4 v9 h-4 M285.600 193.600 h3" stroke-width=".5"/><circle cx="286" cy="193.600" r="1.200" stroke-width=".4"/>
<rect x="285.400" y="213.600" width="12.200" height="15.400" rx="1" fill="#e2e2e2" stroke="#555" stroke-width=".6"/><path d="M286.4 213.6 V229 M287.5 213.6 V229 M288.7 213.6 V229 M289.8 213.6 V229 M291.0 213.6 V229 M292.1 213.6 V229 M293.3 213.6 V229 M294.4 213.6 V229 M295.6 213.6 V229 M296.8 213.6 V229" stroke="#666" stroke-width=".4"/>
<rect x="283.600" y="212" width="7.600" height="5.600" fill="#fff" stroke="#555" stroke-width=".5"/>
<path d="M284 287.400 h4.800 v1.600 h-1.600 v3.400 h1.600 v1.600 h-4.800" stroke="#444" stroke-width=".6"/>
</g>
<!-- sink -->
<g fill="none" stroke="#505050" stroke-width=".6" transform="translate(0,.6)">
<path d="M450 252 H511.400 Q513.200 252 513.200 254 V326.400 Q513.200 328.400 511.400 328.400 H450 Q448.200 328.400 448.300 326.400 Q451.600 290 448.300 254 Q448.200 252 450 252Z"/>
<path d="M450.800 255 H510.400 V325.400 H450.800 Q453.800 290 450.800 255Z" stroke-width=".5"/>
<path d="M451.400 255.600 L491.600 282 M453 255.200 L493 281.200 M451.400 324.800 L491.600 298.400 M453 325.200 L493 299.200" stroke-width=".5"/>
<path d="M491.600 282 h2.600 v2.600 M491.600 298.400 h2.600 v-2.600" stroke-width=".5"/>
<path d="M494.600 255 Q488.800 290 494.600 325.400" stroke-width=".45"/>
<path d="M510.400 271 A14.600 19.200 0 0 0 510.400 309.400 M510.400 273.600 A12.400 16.600 0 0 0 510.400 306.800" stroke-width=".5"/>
<circle cx="486.200" cy="289.700" r="4.200"/><circle cx="486.200" cy="289.700" r="2.600" stroke-width=".5"/>
<path d="M472 289.700 H517" stroke="#222" stroke-width=".7"/>
<path d="M486.200 284.300 v10.800" stroke="#333" stroke-width=".4"/>
<rect x="490.600" y="288.300" width="12.400" height="2.800" fill="#bbb" stroke="#333" stroke-width=".6"/>
<path d="M504.600 286.700 v6 M503 287.300 l1.600 -1.400 l1.600 1.400 M503 292.100 l1.600 1.400 l1.600-1.400" stroke="#333" stroke-width=".5"/>
<path d="M517.200 272.600 h1.800 M518.100 271.700 v1.800" stroke="#333" stroke-width=".4"/>
<path d="M503.400 336 l2-1.800 v3.600z M506.400 334 v4 M507.600 334.400 h3 v3.400 h-3z M511.400 334 v4" stroke="#333" stroke-width=".5"/>
</g>
<!-- bottom grab bar -->
<g fill="none" stroke="#555" stroke-width=".55">
<path d="M419.400 359.600 V353.400 Q419.400 348.200 424.600 348.200 H461 Q466.200 348.200 466.200 353.400 V359.600 M423.400 359.600 V354.600 Q423.400 352.200 425.800 352.200 H459.800 Q462.200 352.200 462.200 354.600 V359.600"/>
<path d="M417 359.400 h8.600 v1.400 h-8.600z M460 359.400 h8.600 v1.400 h-8.600z" stroke-width=".45"/>
<path d="M444 352.200 V361 M431.600 348.200 v4 M454 348.200 v4" stroke-width=".45"/>
</g>
<!-- door -->
<g fill="none" stroke="#444" stroke-width=".6">
<path d="M294.500 362.400 L391.400 398.200 L390.300 401.700 L293.600 366.600Z" fill="#fff"/>
<path d="M310 368.100 L312.600 361 Q313.500 358.600 315.900 359.500 L378.300 382.400 Q380.700 383.400 379.900 385.800 L377.300 392.900 M313 369.200 L314.700 364.600 Q315.300 363 316.900 363.500 L374.600 384.700 Q376.200 385.400 375.700 387 L373.900 391.600" stroke="#8a8a8a" stroke-width=".5"/>
<path d="M308.400 366.600 l7 2.600 M372.400 390 l7 2.600" stroke="#8a8a8a" stroke-width=".5"/>
</g>
</svg>

<svg width="780" height="439" viewBox="0 0 780 439" font-family="Liberation Sans, sans-serif">
<defs>
<linearGradient id="gHair" x1="0" y1="0" x2="0" y2="1"><stop offset="0" stop-color="#fde04a"/><stop offset="1" stop-color="#f2a31a"/></linearGradient>
<linearGradient id="gBlue" x1="0" y1="0" x2="0" y2="1"><stop offset="0" stop-color="#3aa0e8"/><stop offset="1" stop-color="#1c70c8"/></linearGradient>
<linearGradient id="gTxt" x1="0" y1="0" x2="0" y2="1"><stop offset="0" stop-color="#35a6ea"/><stop offset="1" stop-color="#1b63b8"/></linearGradient>
<linearGradient id="gDwgB" x1="0" y1="0" x2="0" y2="1"><stop offset="0" stop-color="#183c6e"/><stop offset="1" stop-color="#2d609e"/></linearGradient>
<linearGradient id="gDwgY" x1="0" y1="0" x2="1" y2="1"><stop offset="0" stop-color="#fbe46a"/><stop offset="1" stop-color="#e6b30e"/></linearGradient>
<linearGradient id="gBtn" x1="0" y1="0" x2="0" y2="1"><stop offset="0" stop-color="#ee2436"/><stop offset=".55" stop-color="#e01a2c"/><stop offset="1" stop-color="#b80f20"/></linearGradient>
<radialGradient id="gCirc" cx=".5" cy=".35" r=".7"><stop offset="0" stop-color="#d8182c"/><stop offset="1" stop-color="#7e0a14"/></radialGradient>
</defs>
<!-- character -->
<g stroke-linejoin="round">
<!-- legs -->
<g stroke-linecap="round" fill="none">
<path d="M705.400 146 L692.400 162.600" stroke="#123a6a" stroke-width="8.600"/><path d="M716 146 L723.800 163.400" stroke="#123a6a" stroke-width="8.400"/>
<path d="M705.400 146 L692.400 162.600" stroke="#2e8ee0" stroke-width="7.600"/><path d="M716 146 L723.800 163.400" stroke="#2383d6" stroke-width="7.400"/>
</g>
<path d="M688.600 160.800 l7.400 4.200 l-1.600 3 q-6.400 2-12-.2 q1.600-4.400 6.200-7z" fill="#1f7fd6" stroke="#123a6a" stroke-width=".5"/>
<path d="M720 164.600 l7.600-2.600 q2.400 4 1.800 8 q-3.800 .6-7.400-1.600z" fill="#1f7fd6" stroke="#123a6a" stroke-width=".5"/>
<path d="M688.400 160.600 l7.800 4.400 M719.800 164.800 l8-2.800" stroke="#3a3a40" stroke-width="1.700"/>
<!-- arms -->
<g stroke-linecap="round" fill="none">
<path d="M702.400 127.400 L688.400 135.400" stroke="#123a6a" stroke-width="7.400"/><path d="M718 128 L729.600 121.400" stroke="#123a6a" stroke-width="7.400"/>
<path d="M702.400 127.400 L688.400 135.400" stroke="#3596e6" stroke-width="6.400"/><path d="M718 128 L729.600 121.400" stroke="#3596e6" stroke-width="6.400"/>
</g>
<!-- torso -->
<path d="M700.400 125 Q709.600 121 719.400 125.400 L720.600 146.400 Q711 150.600 701 147Z" fill="url(#gBlue)" stroke="#123a6a" stroke-width=".5"/>
<path d="M709.800 123.400 L711 148.600" stroke="#444a58" stroke-width="1.300"/>
<path d="M701.200 144.200 Q711 148 720.500 143.800" fill="none" stroke="#444a58" stroke-width="1.300"/>
<path d="M706.600 123 l3.200 3.400 l3.600-3.200" fill="none" stroke="#444a58" stroke-width=".9"/>
<!-- stick -->
<path d="M667 143.600 L750.600 111" stroke="#5c2d10" stroke-width="2.900" stroke-linecap="round"/>
<path d="M667 143.600 L750.600 111" stroke="#a05a28" stroke-width="1.700" stroke-linecap="round"/>
<!-- hands -->
<circle cx="686" cy="136.600" r="2.700" fill="#f3c794" stroke="#6a3e1c" stroke-width=".5"/>
<circle cx="731.600" cy="118.600" r="2.700" fill="#f3c794" stroke="#6a3e1c" stroke-width=".5"/>
<!-- mop head -->
<path d="M746.600 98 Q749 95 751.600 98 Q757 102 759.600 105 Q761 110 757.600 114 Q757 120 755.600 124.600 Q753 120 752.600 115 Q748 112 747 108 Q747.600 103 746.600 98Z" fill="#f8c62c" stroke="#b07d10" stroke-width=".5"/>
<!-- head -->
<path d="M690.600 98 Q689.600 110 697 117.400 Q705.600 124 712.600 120.400 Q724 115.600 728.700 104 L728.700 96 L691 96Z" fill="#f5c992" stroke="#6a3c18" stroke-width=".6"/>
<ellipse cx="730.200" cy="107" rx="2" ry="3.400" fill="#f5c992" stroke="#6a3c18" stroke-width=".5"/>
<path d="M726.400 100.600 l2.600-.4 l.4 8.600 l-2.400 1z" fill="#ef9a1c"/>
<!-- hair -->
<path d="M692.400 92.600 Q691 87 693.800 83.700 L692.800 80.200 L696.800 81.400 Q697.600 78.600 700 78.200 L700 75.400 L704.400 77.200 Q706.600 74.200 710.200 74.100 L711.200 71.400 L714.600 74.200 Q716 72.800 718.400 73 L717.600 76 Q721.600 76.400 723.900 79.600 L726.600 80.200 L726.200 83.400 Q728.700 85.600 728.700 87.800 Q730.200 90.600 729.400 93.600 Q710 97 692.400 92.600Z" fill="url(#gHair)" stroke="#9a5a08" stroke-width=".5"/>
<path d="M698.400 91 q1-7 6.400-11 M706.400 91.400 q.6-8.400 6-13.400 M714.600 91.800 q2-7.600 6.400-10.600 M722.400 91.600 q1.600-4 3.600-5.600" fill="none" stroke="#ee8f14" stroke-width="1.100"/>
<!-- headband -->
<path d="M691 92.400 Q710 96.400 728.800 93.200 L728.800 101.600 Q709 104.800 690.700 99.600Z" fill="#4a4a52" stroke="#1c1c22" stroke-width=".6"/>
<path d="M728.600 94.400 Q733 90.600 737 91.800 Q740.400 93.400 739.600 96 L737.400 94.800 Q740.600 99.400 738.900 104.400 Q737.400 99.400 733.600 98 Q731 97.600 728.700 98.600Z" fill="#2c2c32"/>
<!-- face -->
<path d="M695 102.200 Q698 100.800 701.800 102.600 Q701.400 106.200 698.400 106.400 Q695.400 106 695 102.200Z" fill="#fff" stroke="#3a2414" stroke-width=".4"/>
<path d="M711.800 103 Q715.600 101 719.400 102.600 Q719.200 106.400 716 106.800 Q712.600 106.600 711.800 103Z" fill="#fff" stroke="#3a2414" stroke-width=".4"/>
<circle cx="698.800" cy="104.400" r="1.300" fill="#4a7aaa"/><circle cx="715.400" cy="104.800" r="1.400" fill="#4a7aaa"/>
<circle cx="698.800" cy="104.400" r=".6" fill="#1a2a3a"/><circle cx="715.400" cy="104.800" r=".6" fill="#1a2a3a"/>
<path d="M694.600 102 Q698 100.400 702.200 102.800 M711.400 103.200 Q715.600 100.600 719.800 102.600" fill="none" stroke="#2a1a10" stroke-width=".9"/>
<path d="M702 113.600 Q708.600 117.200 715.700 112.800" fill="none" stroke="#6a3216" stroke-width=".7"/>
<path d="M705 108.600 q1.600 1.800 3.200 .2" fill="none" stroke="#a8683a" stroke-width=".5"/>
<path d="M706 119 q2.400 1.400 4.600 0 l-.8 2 q-1.600 .8-3 0z" fill="#c6955a"/>
</g>
<!-- PislikMimar text -->
<g fill="url(#gTxt)" stroke="url(#gTxt)" stroke-width="1" font-style="italic" font-family="DejaVu Sans, Liberation Sans, sans-serif">
<text x="643" y="186" font-size="27" transform="rotate(-5 643 186)">P</text>
<text x="658.600" y="191.500" font-size="17">i</text>
<text x="664" y="192.800" font-size="18.500">s</text>
<text x="674.600" y="194.600" font-size="26">l</text>
<text x="682.400" y="195" font-size="17">i</text>
<text x="688.600" y="195.800" font-size="25" textLength="13" lengthAdjust="spacingAndGlyphs">k</text>
<text x="704" y="196" font-size="30" textLength="20" lengthAdjust="spacingAndGlyphs" transform="rotate(-2 704 196)">M</text>
<text x="725.400" y="194.200" font-size="16">i</text>
<text x="731" y="194" font-size="19" transform="rotate(-3 731 194)">m</text>
<text x="751" y="191.600" font-size="19" transform="rotate(-8 751 191.600)">a</text>
<text x="764.600" y="187.600" font-size="24" textLength="13" lengthAdjust="spacingAndGlyphs" transform="rotate(-14 764.600 187.600)">r</text>
</g>
<!-- dwg icon -->
<path d="M34.800 308 H59.400 L72.200 322 V356.300 H34.800Z" fill="url(#gDwgY)"/>
<path d="M34.800 308 H59.400 L72.200 322 V343.200 L34.800 333.300Z" fill="url(#gDwgB)"/>
<path d="M59.400 308 Q60.600 317 58.600 320 Q65 320.600 72.200 322Z" fill="#4d7fb8"/>
<path d="M59.400 308 L72.200 322 Q66 318 60.400 319Z" fill="#16305a" opacity=".45"/>
<g stroke="#b8cbe4" stroke-width=".9" fill="none"><path d="M46 308 V332 M34.800 323.600 H72.200"/><rect x="41" y="319" width="9.400" height="9" fill="#2a5a9a"/></g>
<text x="44.200" y="354" font-size="10.600" font-weight="bold" fill="#15151a" textLength="26.400" lengthAdjust="spacingAndGlyphs">.dwg</text>
<!-- download button -->
<rect x="4.500" y="363.700" width="94.500" height="33.600" rx="16.800" fill="#9c0c1a"/>
<rect x="5.100" y="364.200" width="93.300" height="32.200" rx="16.100" fill="url(#gBtn)"/>
<text x="12.700" y="386.300" font-size="13.400" font-weight="bold" fill="#fff" textLength="55" lengthAdjust="spacingAndGlyphs">DOWNLOAD</text>
<circle cx="82.200" cy="381" r="10.300" fill="url(#gCirc)"/>
<path d="M79.600 374.600 h5.200 v6.600 h3.400 l-6 6.400 l-6-6.400 h3.400z" fill="#fff"/>
</svg>

<div id="txt">
<span class="t" id="t0" style="left:258.50px;top:2.62px;font-size:5.3px;line-height:6.36px;color:#d8dbe0;transform:scaleX(0.9009);">Autodesk AutoCAD 2024</span>
<span class="t" id="t1" style="left:316.20px;top:2.62px;font-size:5.3px;line-height:6.36px;color:#d8dbe0;transform:scaleX(0.9174);">Engelli Banyosu (PislikMimar.com).dwg</span>
<span class="t" id="t2" style="left:137.40px;top:2.62px;font-size:5.3px;line-height:6.36px;color:#5eb3e6;transform:scaleX(0.8203);">Share</span>
<span class="t" id="t3" style="left:516.00px;top:2.96px;font-size:4.4px;line-height:5.28px;color:#aab1bd;font-style:italic;transform:scaleX(0.9715);">Type a keyword or phrase</span>
<span class="t" id="t4" style="left:607.00px;top:2.62px;font-size:5.3px;line-height:6.36px;color:#d8dbe0;transform:scaleX(0.9596);">mimarlucky</span>
<span class="t" id="t5" style="left:5.00px;top:13.82px;font-size:5.3px;line-height:6.36px;color:#ffffff;transform:scaleX(0.9901);">Home</span>
<span class="t" id="t6" style="left:27.00px;top:13.82px;font-size:5.3px;line-height:6.36px;color:#cfd3da;transform:scaleX(0.8679);">Insert</span>
<span class="t" id="t7" style="left:46.50px;top:13.82px;font-size:5.3px;line-height:6.36px;color:#cfd3da;transform:scaleX(0.9661);">Annotate</span>
<span class="t" id="t8" style="left:75.00px;top:13.82px;font-size:5.3px;line-height:6.36px;color:#cfd3da;transform:scaleX(0.8981);">Parametric</span>
<span class="t" id="t9" style="left:106.40px;top:13.82px;font-size:5.3px;line-height:6.36px;color:#cfd3da;transform:scaleX(0.8428);">View</span>
<span class="t" id="t10" style="left:124.40px;top:13.82px;font-size:5.3px;line-height:6.36px;color:#cfd3da;transform:scaleX(0.9188);">Manage</span>
<span class="t" id="t11" style="left:150.00px;top:13.82px;font-size:5.3px;line-height:6.36px;color:#cfd3da;transform:scaleX(0.9430);">Output</span>
<span class="t" id="t12" style="left:173.60px;top:13.82px;font-size:5.3px;line-height:6.36px;color:#cfd3da;transform:scaleX(0.9294);">Add-ins</span>
<span class="t" id="t13" style="left:199.00px;top:13.82px;font-size:5.3px;line-height:6.36px;color:#cfd3da;transform:scaleX(0.8969);">Collaborate</span>
<span class="t" id="t14" style="left:232.00px;top:13.82px;font-size:5.3px;line-height:6.36px;color:#cfd3da;transform:scaleX(0.8365);">Express Tools</span>
<span class="t" id="t15" style="left:267.80px;top:13.82px;font-size:5.3px;line-height:6.36px;color:#cfd3da;transform:scaleX(0.8911);">Featured Apps</span>
<span class="t" id="t16" style="left:306.80px;top:13.82px;font-size:5.3px;line-height:6.36px;color:#ffffff;transform:scaleX(0.9116);">Layout</span>
<span class="t" id="t17" style="left:5.00px;top:38.82px;font-size:5.3px;line-height:6.36px;color:#e2e5ea;transform:scaleX(0.8487);">Line</span>
<span class="t" id="t18" style="left:18.30px;top:38.82px;font-size:5.3px;line-height:6.36px;color:#e2e5ea;transform:scaleX(0.9158);">Polyline</span>
<span class="t" id="t19" style="left:41.00px;top:38.82px;font-size:5.3px;line-height:6.36px;color:#e2e5ea;transform:scaleX(0.8858);">Circle</span>
<span class="t" id="t20" style="left:62.40px;top:38.82px;font-size:5.3px;line-height:6.36px;color:#e2e5ea;transform:scaleX(0.8550);">Arc</span>
<span class="t" id="t21" style="left:103.20px;top:24.82px;font-size:5.3px;line-height:6.36px;color:#e2e5ea;transform:scaleX(0.9341);">Move</span>
<span class="t" id="t22" style="left:103.20px;top:34.62px;font-size:5.3px;line-height:6.36px;color:#e2e5ea;transform:scaleX(0.9131);">Copy</span>
<span class="t" id="t23" style="left:103.20px;top:44.52px;font-size:5.3px;line-height:6.36px;color:#e2e5ea;transform:scaleX(0.8819);">Stretch</span>
<span class="t" id="t24" style="left:132.60px;top:24.82px;font-size:5.3px;line-height:6.36px;color:#e2e5ea;transform:scaleX(0.8585);">Rotate</span>
<span class="t" id="t25" style="left:132.60px;top:34.62px;font-size:5.3px;line-height:6.36px;color:#e2e5ea;transform:scaleX(0.9546);">Mirror</span>
<span class="t" id="t26" style="left:132.60px;top:44.52px;font-size:5.3px;line-height:6.36px;color:#e2e5ea;transform:scaleX(0.7849);">Scale</span>
<span class="t" id="t27" style="left:160.90px;top:24.82px;font-size:5.3px;line-height:6.36px;color:#e2e5ea;transform:scaleX(0.8841);">Trim</span>
<span class="t" id="t28" style="left:160.90px;top:34.62px;font-size:5.3px;line-height:6.36px;color:#e2e5ea;transform:scaleX(0.8581);">Fillet</span>
<span class="t" id="t29" style="left:160.90px;top:44.52px;font-size:5.3px;line-height:6.36px;color:#e2e5ea;transform:scaleX(0.8296);">Array</span>
<span class="t" id="t30" style="left:199.20px;top:38.82px;font-size:5.3px;line-height:6.36px;color:#e2e5ea;transform:scaleX(0.8232);">Text</span>
<span class="t" id="t31" style="left:213.00px;top:38.82px;font-size:5.3px;line-height:6.36px;color:#e2e5ea;transform:scaleX(0.9109);">Dimension</span>
<span class="t" id="t32" style="left:248.00px;top:24.82px;font-size:5.3px;line-height:6.36px;color:#e2e5ea;transform:scaleX(0.8484);">Linear</span>
<span class="t" id="t33" style="left:248.00px;top:34.62px;font-size:5.3px;line-height:6.36px;color:#e2e5ea;transform:scaleX(0.8485);">Leader</span>
<span class="t" id="t34" style="left:248.00px;top:44.52px;font-size:5.3px;line-height:6.36px;color:#e2e5ea;transform:scaleX(0.8286);">Table</span>
<span class="t" id="t35" style="left:278.00px;top:38.82px;font-size:5.3px;line-height:6.36px;color:#e2e5ea;transform:scaleX(0.8302);">Layer</span>
<span class="t" id="t36" style="left:272.00px;top:44.82px;font-size:5.3px;line-height:6.36px;color:#e2e5ea;transform:scaleX(0.8983);">Properties</span>
<span class="t" id="t37" style="left:336.30px;top:24.82px;font-size:5.3px;line-height:6.36px;color:#e2e5ea;transform:scaleX(0.8466);">0</span>
<span class="t" id="t38" style="left:344.70px;top:34.62px;font-size:5.3px;line-height:6.36px;color:#e2e5ea;transform:scaleX(0.8974);">Make Current</span>
<span class="t" id="t39" style="left:344.70px;top:44.52px;font-size:5.3px;line-height:6.36px;color:#e2e5ea;transform:scaleX(0.9020);">Match Layer</span>
<span class="t" id="t40" style="left:384.40px;top:38.82px;font-size:5.3px;line-height:6.36px;color:#e2e5ea;transform:scaleX(0.8226);">Insert</span>
<span class="t" id="t41" style="left:408.00px;top:24.82px;font-size:5.3px;line-height:6.36px;color:#e2e5ea;transform:scaleX(0.8487);">Create</span>
<span class="t" id="t42" style="left:408.00px;top:34.62px;font-size:5.3px;line-height:6.36px;color:#e2e5ea;transform:scaleX(0.8533);">Edit</span>
<span class="t" id="t43" style="left:408.00px;top:44.52px;font-size:5.3px;line-height:6.36px;color:#e2e5ea;transform:scaleX(0.9178);">Edit Attributes</span>
<span class="t" id="t44" style="left:452.80px;top:38.82px;font-size:5.3px;line-height:6.36px;color:#e2e5ea;transform:scaleX(0.9351);">Match</span>
<span class="t" id="t45" style="left:448.70px;top:44.82px;font-size:5.3px;line-height:6.36px;color:#e2e5ea;transform:scaleX(0.8818);">Properties</span>
<span class="t" id="t46" style="left:491.00px;top:24.82px;font-size:5.3px;line-height:6.36px;color:#e2e5ea;transform:scaleX(0.8386);">ByLayer</span>
<span class="t" id="t47" style="left:509.60px;top:34.62px;font-size:5.3px;line-height:6.36px;color:#e2e5ea;transform:scaleX(0.8437);">ByLayer</span>
<span class="t" id="t48" style="left:509.60px;top:44.52px;font-size:5.3px;line-height:6.36px;color:#e2e5ea;transform:scaleX(0.8437);">ByLayer</span>
<span class="t" id="t49" style="left:556.00px;top:38.82px;font-size:5.3px;line-height:6.36px;color:#e2e5ea;transform:scaleX(0.9094);">Group</span>
<span class="t" id="t50" style="left:587.70px;top:38.82px;font-size:5.3px;line-height:6.36px;color:#e2e5ea;transform:scaleX(0.8685);">Measure</span>
<span class="t" id="t51" style="left:627.00px;top:38.82px;font-size:5.3px;line-height:6.36px;color:#e2e5ea;transform:scaleX(0.8268);">Paste</span>
<span class="t" id="t52" style="left:666.00px;top:38.82px;font-size:5.3px;line-height:6.36px;color:#e2e5ea;transform:scaleX(0.8279);">Base</span>
<span class="t" id="t53" style="left:38.00px;top:54.12px;font-size:5.3px;line-height:6.36px;color:#d5d9df;transform:scaleX(0.8646);">Draw</span>
<span class="t" id="t54" style="left:132.00px;top:54.12px;font-size:5.3px;line-height:6.36px;color:#d5d9df;transform:scaleX(0.9738);">Modify</span>
<span class="t" id="t55" style="left:217.20px;top:54.12px;font-size:5.3px;line-height:6.36px;color:#d5d9df;transform:scaleX(0.9115);">Annotation</span>
<span class="t" id="t56" style="left:316.30px;top:54.12px;font-size:5.3px;line-height:6.36px;color:#d5d9df;transform:scaleX(0.8424);">Layers</span>
<span class="t" id="t57" style="left:405.00px;top:54.12px;font-size:5.3px;line-height:6.36px;color:#d5d9df;transform:scaleX(0.9264);">Block</span>
<span class="t" id="t58" style="left:484.00px;top:54.12px;font-size:5.3px;line-height:6.36px;color:#d5d9df;transform:scaleX(0.9025);">Properties</span>
<span class="t" id="t59" style="left:557.50px;top:54.12px;font-size:5.3px;line-height:6.36px;color:#d5d9df;transform:scaleX(0.8633);">Groups</span>
<span class="t" id="t60" style="left:590.80px;top:54.12px;font-size:5.3px;line-height:6.36px;color:#d5d9df;transform:scaleX(0.8900);">Utilities</span>
<span class="t" id="t61" style="left:629.70px;top:54.12px;font-size:5.3px;line-height:6.36px;color:#d5d9df;transform:scaleX(0.8948);">Clipboard</span>
<span class="t" id="t62" style="left:660.80px;top:54.12px;font-size:5.3px;line-height:6.36px;color:#d5d9df;transform:scaleX(0.8516);">View</span>
<span class="t" id="t63" style="left:23.80px;top:64.02px;font-size:5.3px;line-height:6.36px;color:#d5d9df;transform:scaleX(0.8223);">Start</span>
<span class="t" id="t64" style="left:43.00px;top:64.02px;font-size:5.3px;line-height:6.36px;color:#d5d9df;transform:scaleX(0.8986);">Şarkı Söyleyen İnsan (PislikMimar.com)*</span>
<span class="t" id="t65" style="left:143.30px;top:64.02px;font-size:5.3px;line-height:6.36px;color:#d5d9df;transform:scaleX(0.9259);">Oyun Oynayan Çocuklar (PislikMimar.com)*</span>
<span class="t" id="t66" style="left:253.30px;top:64.02px;font-size:5.3px;line-height:6.36px;color:#d5d9df;transform:scaleX(0.9100);">Soyut İnsan (PislikMimar.com)*</span>
<span class="t" id="t67" style="left:335.00px;top:64.02px;font-size:5.3px;line-height:6.36px;color:#d5d9df;transform:scaleX(0.9113);">Konferans Salon Plan (PislikMimar.com)*</span>
<span class="t" id="t68" style="left:438.00px;top:64.02px;font-size:5.3px;line-height:6.36px;color:#ffffff;font-weight:bold;transform:scaleX(0.8576);">Engelli Banyosu (PislikMimar.com)*</span>
<span class="t" id="t69" style="left:24.00px;top:412.82px;font-size:5.3px;line-height:6.36px;color:#d5d9df;transform:scaleX(0.9143);">Model</span>
<span class="t" id="t70" style="left:47.20px;top:412.82px;font-size:5.3px;line-height:6.36px;color:#ffffff;font-weight:bold;transform:scaleX(0.8517);">Layout1</span>
<span class="t" id="t71" style="left:593.70px;top:413.56px;font-size:4.4px;line-height:5.28px;color:#e8ebf0;font-weight:bold;transform:scaleX(0.9316);">PAPER</span>
<span class="t" id="t72" style="left:35.90px;top:427.76px;font-size:6.4px;line-height:7.68px;color:#4a4a4a;transform:scaleX(0.9545);">Ara</span>
<span class="t" id="t73" style="left:739.00px;top:424.56px;font-size:4.4px;line-height:5.28px;color:#e8e8e8;">02:43</span>
<span class="t" id="t74" style="left:734.50px;top:431.96px;font-size:4.4px;line-height:5.28px;color:#e8e8e8;transform:scaleX(0.9689);">17.04.2026</span>
</div>
</body></html>
